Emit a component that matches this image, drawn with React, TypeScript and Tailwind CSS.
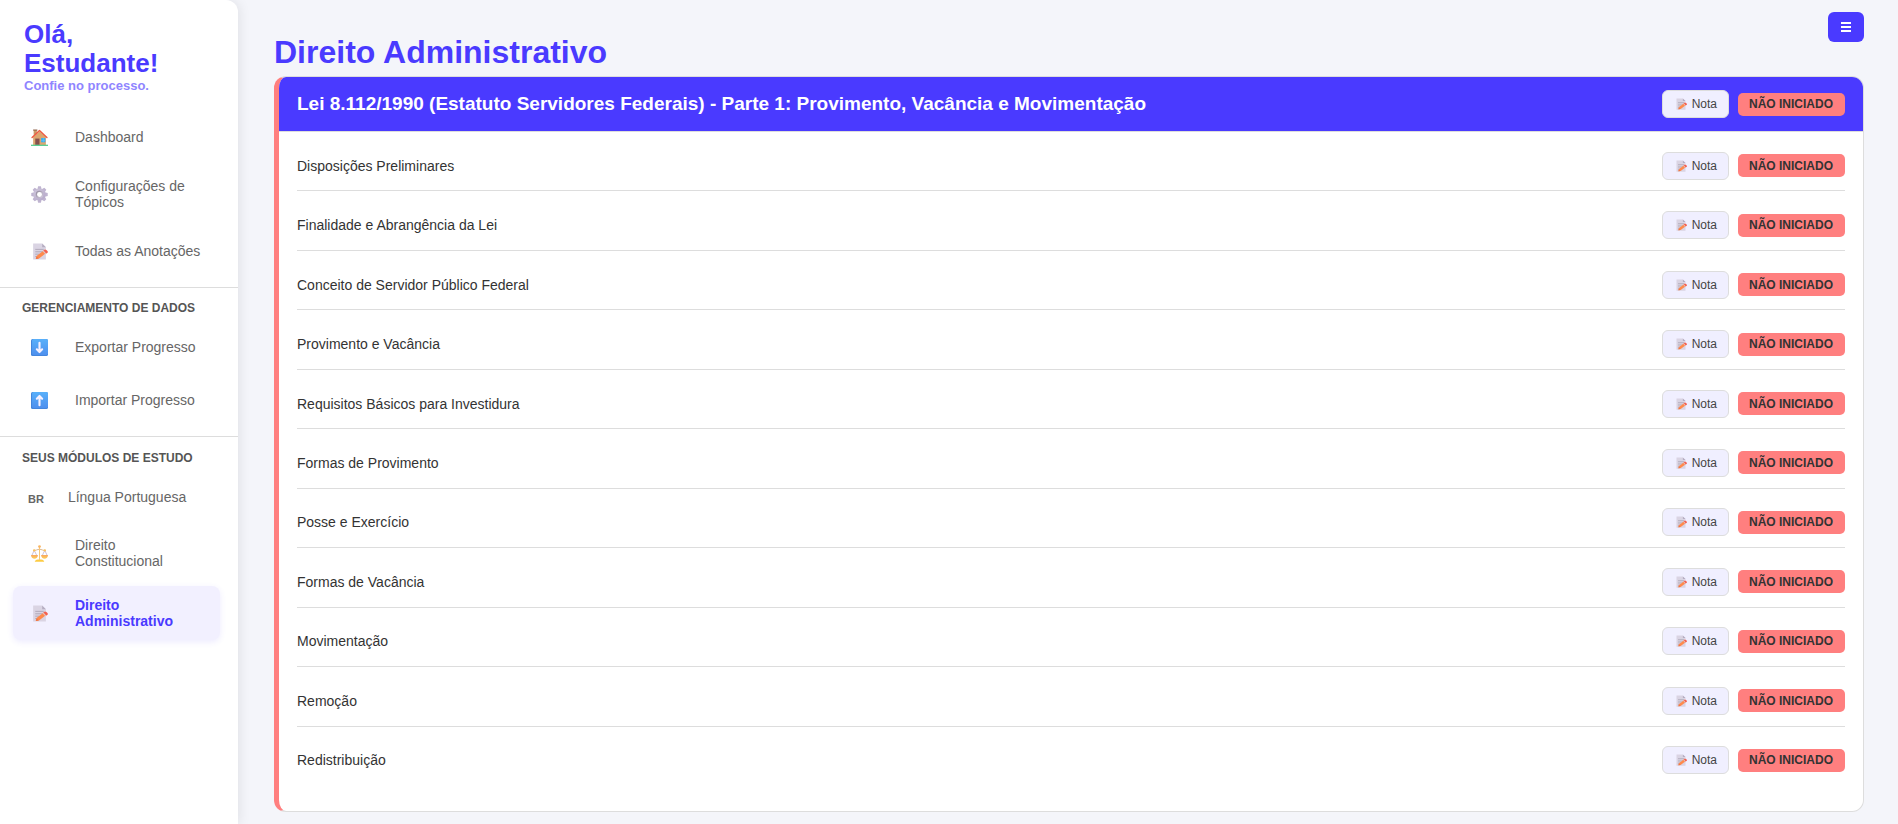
import type { ReactNode } from 'react';

function HouseIcon() {
  return (
    <svg viewBox="0 0 32 32" className="size-[17px]" aria-hidden="true">
      <path d="M5 2h6v9H5z" fill="#c99a68" />
      <path d="M4 1h8v2H4z" fill="#8a5b40" />
      <path d="M4 15 16 4l12 11v15H4z" fill="#dca670" />
      <path d="M8 18h8v12H8z" fill="#85504c" />
      <path d="M19 17h8v8h-8z" fill="#3aaef0" />
      <path d="M22.500 17h1v8h-1zM19 20.500h8v1h-8z" fill="#6cc6f6" />
      <path d="M2 16 16 3l14 13" fill="none" stroke="#ee5a42" strokeWidth="2.6" strokeLinecap="round" strokeLinejoin="round" />
      <path d="M0 29.500h32V32H0z" fill="#5bcf94" />
    </svg>
  );
}

const teeth = [0, 45, 90, 135, 180, 225, 270, 315];

function GearIcon() {
  return (
    <svg viewBox="0 0 32 32" className="size-[17px]" aria-hidden="true">
      <defs>
        <linearGradient id="gear-body" x1="0" y1="0" x2="1" y2="1">
          <stop offset="0" stopColor="#cfc8dc" />
          <stop offset="1" stopColor="#b4a6c8" />
        </linearGradient>
        <linearGradient id="gear-ring" x1="0" y1="0" x2="1" y2="1">
          <stop offset="0" stopColor="#8f8798" />
          <stop offset="1" stopColor="#d6cfe0" />
        </linearGradient>
      </defs>
      <g fill="#bfb4d0">
        {teeth.map((a) => (
          <path key={a} d="M13.400 0.500h5.200L20.500 8h-9z" transform={`rotate(${a} 16 16)`} />
        ))}
      </g>
      <circle cx="16" cy="16" r="11.500" fill="url(#gear-body)" />
      <circle cx="16" cy="16" r="7" fill="url(#gear-ring)" />
      <circle cx="16" cy="16" r="4.600" fill="#fff" />
    </svg>
  );
}

function MemoIcon({ small = false }: { small?: boolean }) {
  return (
    <svg viewBox="0 0 32 32" className={small ? 'size-3' : 'size-[17px]'} aria-hidden="true">
      <path d="M4 1h17l7 7v23H4z" fill="#dad4e3" />
      <path d="M21 1v7h7z" fill="#b5adc1" />
      <path d="M8 12h16M8 16.500h14M8 21h8M8 25.500h5" stroke="#aaa2b4" strokeWidth="1.600" />
      <path d="m9 30 2-6 13-10 4.500 5L15 29z" fill="#ff8a4c" />
      <path d="m9 30 1.500-5 4 4.200z" fill="#ee7445" />
      <path d="m23 14.500 3-2.500c3 0 6 3 6 5.500L28.500 20z" fill="#f45f4e" />
      <path d="m22 15.500 1.500-1.300 5 5.600-1.600 1.400z" fill="#e0c3c4" />
    </svg>
  );
}

function ArrowIcon({ up = false }: { up?: boolean }) {
  const tint = up ? 'arrow-up-tint' : 'arrow-down-tint';
  return (
    <svg viewBox="0 0 32 32" className="size-[17px]" aria-hidden="true">
      <defs>
        <linearGradient id={tint} x1="0" y1="0" x2="0" y2="1">
          <stop offset="0" stopColor="#58b0fa" />
          <stop offset="1" stopColor="#4e90ee" />
        </linearGradient>
      </defs>
      <rect width="32" height="32" rx="3" fill="#4486dd" />
      <rect x="2" width="30" height="30" rx="3" fill={`url(#${tint})`} />
      <path
        d="M16 7v17M11 19.500l5 5 5-5"
        transform={up ? 'rotate(180 16 16)' : undefined}
        fill="none"
        stroke="#f6f1ff"
        strokeWidth="4"
        strokeLinecap="round"
        strokeLinejoin="round"
      />
    </svg>
  );
}

function ScalesIcon() {
  return (
    <svg viewBox="0 0 32 32" className="size-[17px]" aria-hidden="true">
      <defs>
        <linearGradient id="scales-pan" x1="0" y1="0" x2="0" y2="1">
          <stop offset="0" stopColor="#f9a75e" />
          <stop offset="1" stopColor="#fdd25a" />
        </linearGradient>
      </defs>
      <path d="M6 10 1.500 20M6 10l5 10M26 10l-5 10M26 10l4.500 10" stroke="#c3b5d2" strokeWidth="1.600" fill="none" />
      <path d="M5 10c4 1 7-2 11-2s7 3 11 2" stroke="#d9b48e" strokeWidth="1.800" fill="none" />
      <path d="M15 4h2v24h-2z" fill="#f5c77c" />
      <circle cx="16" cy="3" r="2.600" fill="#fab560" />
      <circle cx="6" cy="10" r="2.200" fill="#fbc25a" />
      <circle cx="26" cy="10" r="2.200" fill="#fbc25a" />
      <path d="M0 19h13c0 4-3 7-6.500 7S0 23 0 19zM19 19h13c0 4-3 7-6.500 7S19 23 19 19z" fill="url(#scales-pan)" />
      <path d="M7 31.500c1-3.500 5-4 9-4s8 .5 9 4z" fill="#fccb42" />
    </svg>
  );
}

function NavItem({ icon, label, active = false }: { icon: ReactNode; label: string; active?: boolean }) {
  return (
    <a
      href="#"
      aria-current={active ? 'page' : undefined}
      className={
        active
          ? 'flex min-h-[46px] items-center gap-[27px] rounded-lg bg-[#f2f0ff] py-[11px] pr-4 pl-[18px] font-bold text-[#4a3aff] shadow-[0_2px_6px_rgba(74,58,255,0.1)]'
          : 'flex min-h-[46px] items-center gap-[27px] rounded-lg py-[11px] pr-4 pl-[18px] text-[#666]'
      }
    >
      <span className="shrink-0">{icon}</span>
      <span>{label}</span>
    </a>
  );
}

function NoteButton() {
  return (
    <button
      type="button"
      className="flex h-7 items-center gap-[5px] rounded-md border border-[#ddd] bg-[#f0efff] pr-[11px] pl-3 text-xs text-[#444]"
    >
      <MemoIcon small />
      Nota
    </button>
  );
}

function Actions() {
  return (
    <div className="flex shrink-0 items-center gap-[9px]">
      <NoteButton />
      <button type="button" className="h-[23px] rounded-[5px] bg-[#ff7f7f] pr-3 pl-[11px] text-xs font-bold text-[#333]">
        NÃO INICIADO
      </button>
    </div>
  );
}

const topics = [
  'Disposições Preliminares',
  'Finalidade e Abrangência da Lei',
  'Conceito de Servidor Público Federal',
  'Provimento e Vacância',
  'Requisitos Básicos para Investidura',
  'Formas de Provimento',
  'Posse e Exercício',
  'Formas de Vacância',
  'Movimentação',
  'Remoção',
  'Redistribuição',
];

export default function App() {
  return (
    <div className="flex min-h-screen bg-[#f4f5fa] font-['Liberation_Sans',Arial,sans-serif] text-sm leading-4">
      <aside className="w-[238px] shrink-0 rounded-tr-xl bg-white shadow-[2px_0_12px_rgba(0,0,0,0.08)]">
        <header className="px-6 pt-5">
          <p className="w-40 text-[26px] leading-[29px] font-bold text-[#4a3aff]">Olá, Estudante!</p>
          <p className="text-[13px] leading-4 font-bold text-[#8f85ff]">Confie no processo.</p>
        </header>
        <nav>
          <div className="flex flex-col gap-[7px] border-b border-[#ddd] pt-5 pr-[18px] pb-[13px] pl-[13px]">
            <NavItem icon={<HouseIcon />} label="Dashboard" />
            <NavItem icon={<GearIcon />} label="Configurações de Tópicos" />
            <NavItem icon={<MemoIcon />} label="Todas as Anotações" />
          </div>
          <section className="border-b border-[#ddd] pt-3 pb-[13px]">
            <h2 className="px-[22px] text-xs leading-4 font-bold text-[#555]">GERENCIAMENTO DE DADOS</h2>
            <div className="flex flex-col gap-[7px] pt-2 pr-[18px] pl-[13px]">
              <NavItem icon={<ArrowIcon />} label="Exportar Progresso" />
              <NavItem icon={<ArrowIcon up />} label="Importar Progresso" />
            </div>
          </section>
          <section className="pt-[13px]">
            <h2 className="px-[22px] text-xs leading-4 font-bold text-[#555]">SEUS MÓDULOS DE ESTUDO</h2>
            <div className="flex flex-col gap-1.5 pt-2 pr-[18px] pl-[13px]">
              <a href="#" className="flex min-h-[46px] items-center gap-6 pl-[15px] text-[#666]">
                <span className="pt-1 text-[11px] font-bold">BR</span>
                <span>Língua Portuguesa</span>
              </a>
              <NavItem icon={<ScalesIcon />} label="Direito Constitucional" />
              <NavItem icon={<MemoIcon />} label="Direito Administrativo" active />
            </div>
          </section>
        </nav>
      </aside>

      <main className="flex min-w-0 flex-1 flex-col pt-3 pr-[34px] pb-3 pl-9">
        <div className="flex items-start justify-between pb-1">
          <h1 className="pt-5 text-[32px] leading-10 font-bold text-[#4a3aff]">Direito Administrativo</h1>
          <button
            type="button"
            aria-label="Menu"
            className="flex h-[30px] w-9 items-center justify-center rounded-md bg-[#4a3aff] text-white"
          >
            <svg viewBox="0 0 10 10" className="size-2.5" aria-hidden="true">
              <path d="M0 0h10v2H0zM0 4h10v2H0zM0 8h10v2H0z" fill="currentColor" />
            </svg>
          </button>
        </div>
        <article className="flex flex-1 flex-col overflow-hidden rounded-xl border border-l-[5px] border-[#ddd] border-l-[#ff7f7f] bg-white">
          <header className="flex h-[55px] shrink-0 items-center justify-between border-b border-[#ddd] bg-[#4a3aff] px-[18px]">
            <h2 className="text-[19px] leading-6 font-bold text-white">
              Lei 8.112/1990 (Estatuto Servidores Federais) - Parte 1: Provimento, Vacância e Movimentação
            </h2>
            <Actions />
          </header>
          <ul className="flex flex-1 flex-col px-[18px] pb-[25px]">
            {topics.map((topic) => (
              <li
                key={topic}
                className="flex flex-1 items-center justify-between border-b border-[#ddd] pt-[19px] pb-2.5 text-[#333] last:border-transparent"
              >
                <span>{topic}</span>
                <Actions />
              </li>
            ))}
          </ul>
        </article>
      </main>
    </div>
  );
}
